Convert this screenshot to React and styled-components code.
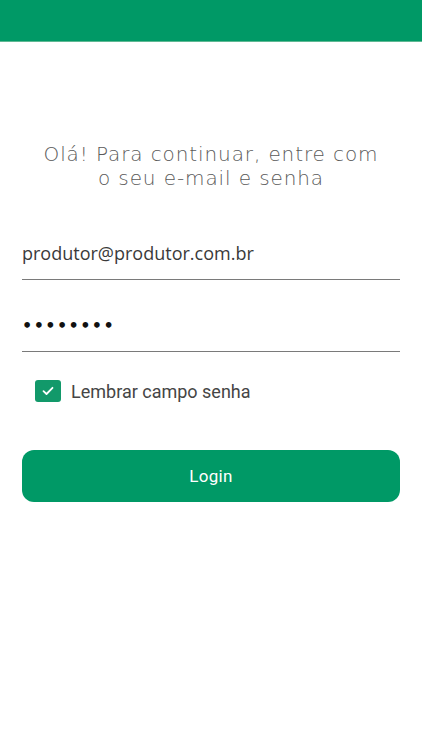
import styled, { createGlobalStyle } from "styled-components";

const GlobalStyle = createGlobalStyle`
    html, body {
        margin: 0;
        padding: 0;
        background: #ffffff;
    }
    * {
        box-sizing: border-box;
    }
`;

const Page = styled.div`
    display: flex;
    flex-direction: column;
    min-height: 750px;
    background: #ffffff;
`;

const Header = styled.header`
    height: 42px;
    background: #009966;
    border-bottom: 1px solid #5fb893;
`;

const Title = styled.h1`
    margin: 100px 0 0;
    text-align: center;
    font-family: "DejaVu Sans", sans-serif;
    font-weight: 200;
    font-size: 20px;
    line-height: 24px;
    letter-spacing: 0.9px;
    color: #5a5a5a;
`;

const Form = styled.form`
    display: flex;
    flex-direction: column;
    padding: 0 22px;
    margin-top: 53px;
`;

const Field = styled.div`
    display: flex;
    align-items: center;
    height: 37px;
    padding-bottom: 16px;
    border-bottom: 1px solid #7a7a7a;
    margin-top: ${(p) => (p.$first ? "0" : "35px")};
    font-family: "Open Sans", sans-serif;
    font-size: 18px;
    line-height: 21px;
    color: #3a3a3a;
`;

const Dots = styled.span`
    font-family: "DejaVu Sans", sans-serif;
    font-size: 16px;
    font-weight: 700;
    letter-spacing: 1.4px;
    color: #111111;
`;

const CheckRow = styled.label`
    display: flex;
    align-items: center;
    gap: 10px;
    margin: 28px 0 0 13px;
    font-family: Roboto, sans-serif;
    font-size: 18px;
    color: #454545;
`;

const Box = styled.span`
    display: flex;
    align-items: center;
    justify-content: center;
    width: 26px;
    height: 22px;
    border-radius: 3px;
    background: #12996a;
`;

const Button = styled.button`
    margin-top: 48px;
    height: 52px;
    border: none;
    border-radius: 12px;
    background: #009966;
    color: #ffffff;
    font-family: Roboto, sans-serif;
    font-size: 17px;
    letter-spacing: 0.3px;
`;

export default function App() {
    return (
        <Page>
            <GlobalStyle />
            <Header />
            <Title>
                Olá! Para continuar, entre com
                <br />o seu e-mail e senha
            </Title>
            <Form onSubmit={(e) => e.preventDefault()}>
                <Field $first>produtor@produtor.com.br</Field>
                <Field>
                    <Dots>••••••••</Dots>
                </Field>
                <CheckRow>
                    <Box>
                        <svg width="12" height="10" viewBox="0 0 12 10" fill="none">
                            <path d="M1.5 5.2 L4.5 8 L10.5 1.8" stroke="#ffffff" strokeWidth="1.8" strokeLinecap="round" strokeLinejoin="round" />
                        </svg>
                    </Box>
                    Lembrar campo senha
                </CheckRow>
                <Button type="submit">Login</Button>
            </Form>
        </Page>
    );
}
